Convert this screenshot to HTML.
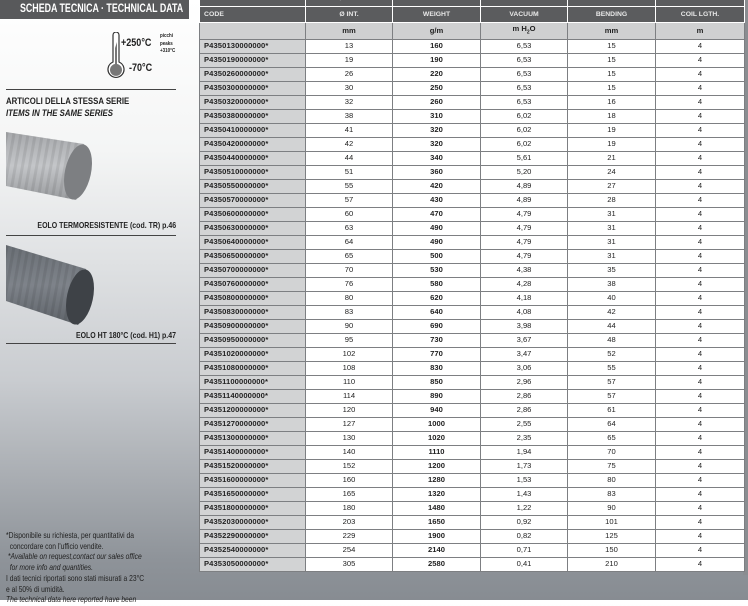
<!DOCTYPE html>
<html><head><meta charset="utf-8"><style>
*{margin:0;padding:0;box-sizing:border-box}
body{width:748px;height:600px;overflow:hidden;position:relative;font-family:"Liberation Sans",sans-serif;background:linear-gradient(#ffffff 0px,#f4f5f5 150px,#c9ccd0 380px,#8e9399 560px,#878c92 600px);color:#222}
.a{position:absolute;white-space:nowrap}
.sx{transform:scaleX(.82);transform-origin:left top}
.sxr{transform:scaleX(.82);transform-origin:right top}
.title{left:0;top:0;width:189px;height:19px;background:#58595b}
.title span{position:absolute;left:20px;top:0;color:#fff;font-weight:bold;font-size:11.5px;line-height:18px;transform:scaleX(.77);transform-origin:left top;white-space:nowrap}
.hr{height:1px;background:#444;left:6px;width:170px}
table{position:absolute;left:199px;top:-9px;width:545px;border-collapse:collapse;table-layout:fixed;font-size:7.6px;background:#fff}
td{border:1px solid #7d7f82;text-align:center;height:14px;line-height:12px;padding:0;white-space:nowrap;overflow:hidden}
td:first-child{text-align:left;padding-left:4px;background:#d2d3d4;font-weight:bold;letter-spacing:.1px}
td:nth-child(3){font-weight:bold}
tr.h td{background:#5b5c5e;color:#e8e8e8;font-weight:bold;font-size:6.8px;border-color:#fff;height:16px}
tr.h0 td{height:15px}
tr.u td{background:#cfd0d1;font-weight:bold;height:15px;border-color:#7d7f82}
.foot{font-size:8.2px;line-height:10.5px;color:#222}
</style></head><body>
<div class="a" style="left:743px;top:0;width:5px;height:575px;background:#8a8d91"></div>
<div class="a title"><span>SCHEDA TECNICA · TECHNICAL DATA</span></div>
<svg class="a" style="left:104px;top:32px" width="26" height="48" viewBox="0 0 26 48">
<path d="M9 3 a3 3 0 0 1 6 0 V30 a8 8 0 1 1 -6 0 Z" fill="#fff" stroke="#333" stroke-width="1.2"/>
<path d="M11 16 L13 10 V32 a6 6 0 1 1 -2 0 Z" fill="#777"/>
</svg>
<div class="a sx" style="left:121px;top:37px;font-weight:bold;font-size:11px">+250°C</div>
<div class="a sx" style="left:160px;top:33px;font-weight:bold;font-size:5.5px;line-height:7.5px">picchi<br>peaks<br>+310°C</div>
<div class="a sx" style="left:129px;top:62px;font-weight:bold;font-size:11px">-70°C</div>
<div class="a hr" style="top:89px"></div>
<div class="a sx" style="left:6px;top:96px;font-weight:bold;font-size:9.5px;line-height:11.5px">ARTICOLI DELLA STESSA SERIE<br><i>ITEMS IN THE SAME SERIES</i></div>
<svg class="a" style="left:6px;top:130px" width="90" height="80" viewBox="0 0 90 80">
<defs><linearGradient id="g1" x1="0" y1="0" x2="0" y2="1"><stop offset="0" stop-color="#a7a9ac"/><stop offset=".5" stop-color="#c4c6c9"/><stop offset="1" stop-color="#9a9c9f"/></linearGradient>
<pattern id="r1" width="7" height="80" patternUnits="userSpaceOnUse" patternTransform="rotate(10)"><rect width="3" height="80" fill="#000" opacity=".08"/></pattern></defs>
<path d="M0 2 L78 14 Q92 40 70 70 L0 56 Z" fill="url(#g1)"/>
<path d="M0 2 L78 14 Q92 40 70 70 L0 56 Z" fill="url(#r1)"/>
<ellipse cx="72" cy="42" rx="13" ry="28" fill="#7d7f82" transform="rotate(12 72 42)"/>
</svg>
<div class="a sxr" style="right:572px;top:220px;font-weight:bold;font-size:8.5px">EOLO TERMORESISTENTE (cod. TR) p.46</div>
<div class="a hr" style="top:235px"></div>
<svg class="a" style="left:6px;top:243px" width="90" height="85" viewBox="0 0 90 85">
<defs><linearGradient id="g2" x1="0" y1="0" x2="0" y2="1"><stop offset="0" stop-color="#6b7076"/><stop offset=".5" stop-color="#7e838a"/><stop offset="1" stop-color="#5f646a"/></linearGradient></defs>
<path d="M0 2 L80 26 Q94 55 72 82 L0 58 Z" fill="url(#g2)"/>
<path d="M0 2 L80 26 Q94 55 72 82 L0 58 Z" fill="url(#r1)"/>
<ellipse cx="74" cy="54" rx="13" ry="28" fill="#3e4247" transform="rotate(12 74 54)"/>
</svg>
<div class="a sxr" style="right:572px;top:330px;font-weight:bold;font-size:8.5px">EOLO HT 180°C (cod. H1) p.47</div>
<div class="a hr" style="top:343px"></div>
<div class="a foot sx" style="left:6px;top:531px">*Disponibile su richiesta, per quantitativi da<br>&nbsp;&nbsp;concordare con l'ufficio vendite.<br><i>&nbsp;*Available on request,contact our sales office<br>&nbsp;&nbsp;for more info and quantities.</i></div>
<div class="a foot sx" style="left:6px;top:574px;line-height:10.5px">I dati tecnici riportati sono stati misurati a 23°C<br>e al 50% di umidità.<br><i>The technical data here reported have been</i></div>
<table>
<colgroup><col style="width:106px"><col style="width:87px"><col style="width:88px"><col style="width:87px"><col style="width:88px"><col style="width:89px"></colgroup>
<tr class="h h0"><td>CODICE</td><td>Ø INT.</td><td>PESO</td><td>DEPR.</td><td>R. CURVATURA</td><td>LUNG. ROTOLO</td></tr>
<tr class="h"><td>CODE</td><td>Ø INT.</td><td>WEIGHT</td><td>VACUUM</td><td>BENDING</td><td>COIL LGTH.</td></tr>
<tr class="u"><td></td><td>mm</td><td>g/m</td><td>m H<sub style="font-size:5px">2</sub>O</td><td>mm</td><td>m</td></tr>
<tr><td>P4350130000000*</td><td>13</td><td>160</td><td>6,53</td><td>15</td><td>4</td></tr>
<tr><td>P4350190000000*</td><td>19</td><td>190</td><td>6,53</td><td>15</td><td>4</td></tr>
<tr><td>P4350260000000*</td><td>26</td><td>220</td><td>6,53</td><td>15</td><td>4</td></tr>
<tr><td>P4350300000000*</td><td>30</td><td>250</td><td>6,53</td><td>15</td><td>4</td></tr>
<tr><td>P4350320000000*</td><td>32</td><td>260</td><td>6,53</td><td>16</td><td>4</td></tr>
<tr><td>P4350380000000*</td><td>38</td><td>310</td><td>6,02</td><td>18</td><td>4</td></tr>
<tr><td>P4350410000000*</td><td>41</td><td>320</td><td>6,02</td><td>19</td><td>4</td></tr>
<tr><td>P4350420000000*</td><td>42</td><td>320</td><td>6,02</td><td>19</td><td>4</td></tr>
<tr><td>P4350440000000*</td><td>44</td><td>340</td><td>5,61</td><td>21</td><td>4</td></tr>
<tr><td>P4350510000000*</td><td>51</td><td>360</td><td>5,20</td><td>24</td><td>4</td></tr>
<tr><td>P4350550000000*</td><td>55</td><td>420</td><td>4,89</td><td>27</td><td>4</td></tr>
<tr><td>P4350570000000*</td><td>57</td><td>430</td><td>4,89</td><td>28</td><td>4</td></tr>
<tr><td>P4350600000000*</td><td>60</td><td>470</td><td>4,79</td><td>31</td><td>4</td></tr>
<tr><td>P4350630000000*</td><td>63</td><td>490</td><td>4,79</td><td>31</td><td>4</td></tr>
<tr><td>P4350640000000*</td><td>64</td><td>490</td><td>4,79</td><td>31</td><td>4</td></tr>
<tr><td>P4350650000000*</td><td>65</td><td>500</td><td>4,79</td><td>31</td><td>4</td></tr>
<tr><td>P4350700000000*</td><td>70</td><td>530</td><td>4,38</td><td>35</td><td>4</td></tr>
<tr><td>P4350760000000*</td><td>76</td><td>580</td><td>4,28</td><td>38</td><td>4</td></tr>
<tr><td>P4350800000000*</td><td>80</td><td>620</td><td>4,18</td><td>40</td><td>4</td></tr>
<tr><td>P4350830000000*</td><td>83</td><td>640</td><td>4,08</td><td>42</td><td>4</td></tr>
<tr><td>P4350900000000*</td><td>90</td><td>690</td><td>3,98</td><td>44</td><td>4</td></tr>
<tr><td>P4350950000000*</td><td>95</td><td>730</td><td>3,67</td><td>48</td><td>4</td></tr>
<tr><td>P4351020000000*</td><td>102</td><td>770</td><td>3,47</td><td>52</td><td>4</td></tr>
<tr><td>P4351080000000*</td><td>108</td><td>830</td><td>3,06</td><td>55</td><td>4</td></tr>
<tr><td>P4351100000000*</td><td>110</td><td>850</td><td>2,96</td><td>57</td><td>4</td></tr>
<tr><td>P4351140000000*</td><td>114</td><td>890</td><td>2,86</td><td>57</td><td>4</td></tr>
<tr><td>P4351200000000*</td><td>120</td><td>940</td><td>2,86</td><td>61</td><td>4</td></tr>
<tr><td>P4351270000000*</td><td>127</td><td>1000</td><td>2,55</td><td>64</td><td>4</td></tr>
<tr><td>P4351300000000*</td><td>130</td><td>1020</td><td>2,35</td><td>65</td><td>4</td></tr>
<tr><td>P4351400000000*</td><td>140</td><td>1110</td><td>1,94</td><td>70</td><td>4</td></tr>
<tr><td>P4351520000000*</td><td>152</td><td>1200</td><td>1,73</td><td>75</td><td>4</td></tr>
<tr><td>P4351600000000*</td><td>160</td><td>1280</td><td>1,53</td><td>80</td><td>4</td></tr>
<tr><td>P4351650000000*</td><td>165</td><td>1320</td><td>1,43</td><td>83</td><td>4</td></tr>
<tr><td>P4351800000000*</td><td>180</td><td>1480</td><td>1,22</td><td>90</td><td>4</td></tr>
<tr><td>P4352030000000*</td><td>203</td><td>1650</td><td>0,92</td><td>101</td><td>4</td></tr>
<tr><td>P4352290000000*</td><td>229</td><td>1900</td><td>0,82</td><td>125</td><td>4</td></tr>
<tr><td>P4352540000000*</td><td>254</td><td>2140</td><td>0,71</td><td>150</td><td>4</td></tr>
<tr><td>P4353050000000*</td><td>305</td><td>2580</td><td>0,41</td><td>210</td><td>4</td></tr>
</table>
</body></html>
